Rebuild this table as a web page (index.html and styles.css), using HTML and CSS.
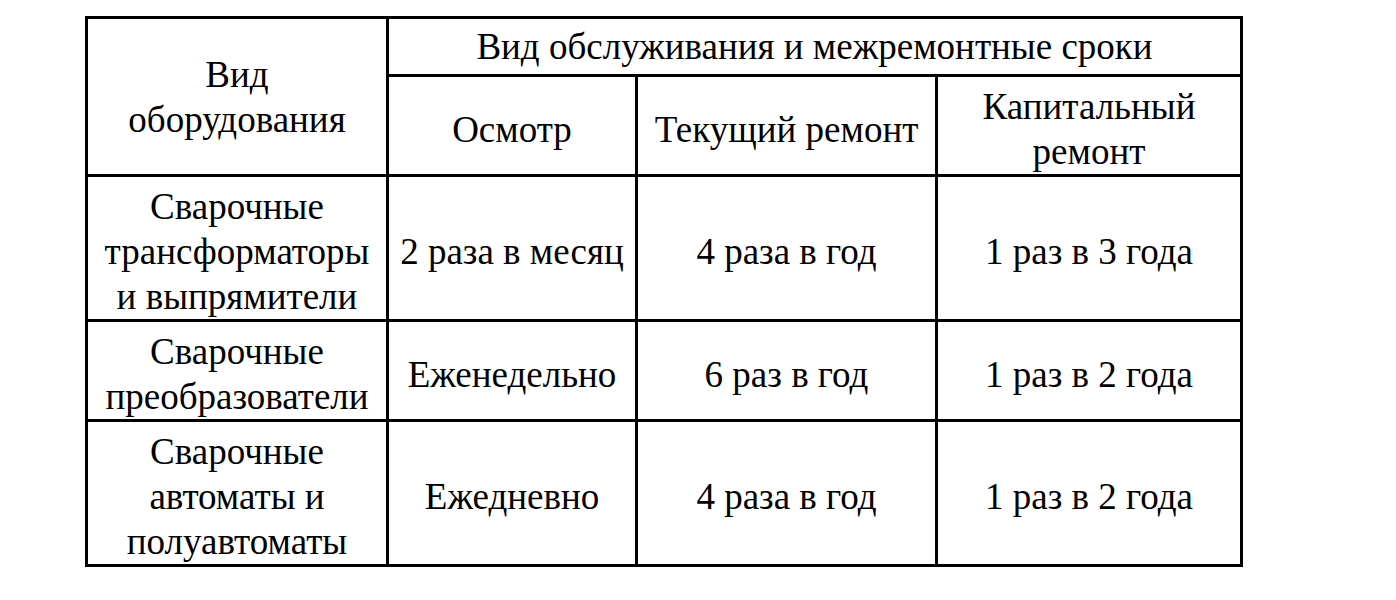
FILE: index.html
```html
<!DOCTYPE html>
<html lang="ru">
<head>
<meta charset="utf-8">
<title>Таблица</title>
<link rel="stylesheet" href="styles.css">
</head>
<body>
<table class="grid">
  <colgroup>
    <col class="c1"><col class="c2"><col class="c3"><col class="c4">
  </colgroup>
  <tr class="h1">
    <td rowspan="2">Вид<br>оборудования</td>
    <td colspan="3">Вид обслуживания и межремонтные сроки</td>
  </tr>
  <tr class="h2">
    <td>Осмотр</td>
    <td>Текущий ремонт</td>
    <td>Капитальный<br>ремонт</td>
  </tr>
  <tr class="r1">
    <td>Сварочные<br>трансформаторы<br>и выпрямители</td>
    <td>2 раза в месяц</td>
    <td>4 раза в год</td>
    <td>1 раз в 3 года</td>
  </tr>
  <tr class="r2">
    <td>Сварочные<br>преобразователи</td>
    <td>Еженедельно</td>
    <td>6 раз в год</td>
    <td>1 раз в 2 года</td>
  </tr>
  <tr class="r3">
    <td>Сварочные<br>автоматы и<br>полуавтоматы</td>
    <td>Ежедневно</td>
    <td>4 раза в год</td>
    <td>1 раз в 2 года</td>
  </tr>
</table>
</body>
</html>
```
FILE: styles.css
```css
html, body {
  margin: 0;
  padding: 0;
  background: #fff;
}
body {
  padding: 16px 0 0 85px;
  font-family: "Liberation Serif", "Times New Roman", serif;
  color: #000;
}
.grid {
  border-collapse: collapse;
  table-layout: fixed;
  width: 1157px;
  font-family: "Liberation Serif", "Times New Roman", serif;
  font-size: 37px;
  line-height: 45px;
}
.grid td {
  border: 3px solid #000;
  text-align: center;
  vertical-align: middle;
  padding: 0;
  font-family: "Liberation Serif", "Times New Roman", serif;
  white-space: nowrap;
}
.h2 td,
.r1 td,
.r2 td,
.r3 td {
  padding-top: 7px;
}
.c1 { width: 301px; }
.c2 { width: 249px; }
.c3 { width: 300px; }
.c4 { width: 305px; }
.h1 { height: 58px; }
.h2 { height: 100px; }
.r1 { height: 145px; }
.r2 { height: 100px; }
.r3 { height: 144px; }
```
